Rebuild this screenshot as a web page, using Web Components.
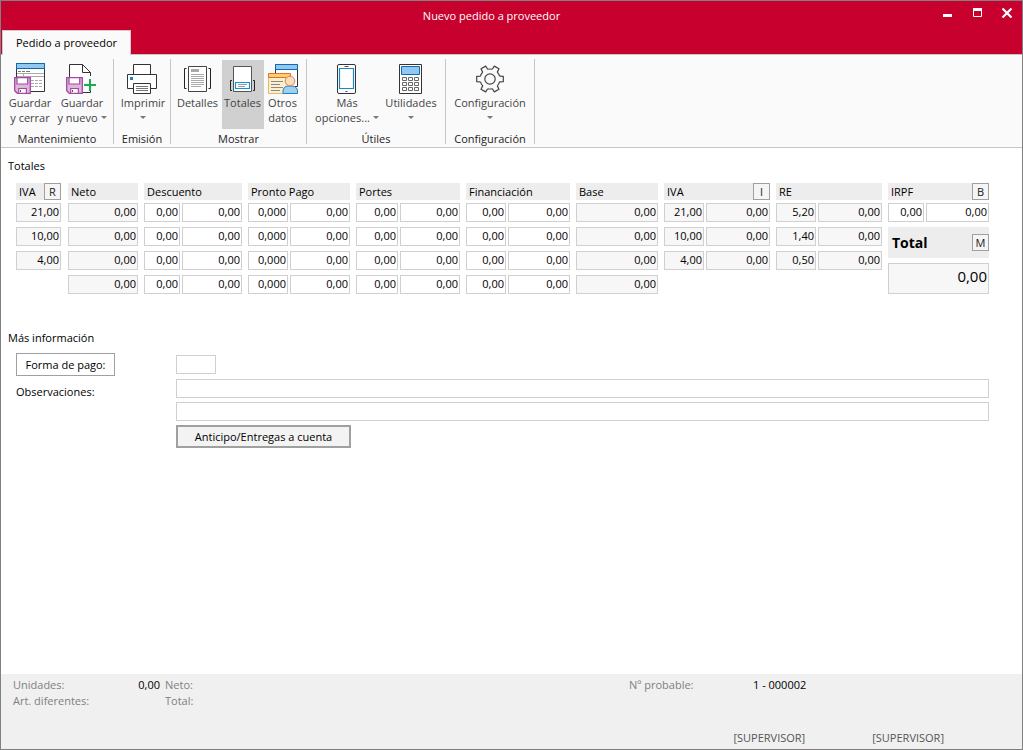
<!DOCTYPE html>
<html lang="es">
<head>
<meta charset="utf-8">
<meta name="viewport" content="width=device-width, initial-scale=1">
<title>Nuevo pedido a proveedor</title>
<style>
  :root {
    --red: #c8002d;
    --line: #d0d0d0;
    --edge: #a0a0a0;
    --head: #ededed;
    --locked: #f7f7f7;
  }
  body { margin: 0; font: 11px/15px "Open Sans", "Noto Sans", sans-serif; color: #000; background: #fff; }
</style>
</head>
<body>
<order-window></order-window>

<template id="order-window">
  <style>
    :host { display: flex; flex-direction: column; min-height: 100vh; box-sizing: border-box; border: 1px solid #808080; }
    main { flex: 1; padding: 10px 33px 16px 7px; }
    h2 { margin: 0; font: inherit; }
    totals-grid { margin: 10px 0 36px 8px; }
    extra-form { margin: 8px 0 0 8px; }
  </style>
  <title-bar>Nuevo pedido a proveedor</title-bar>
  <ribbon-bar></ribbon-bar>
  <main>
    <h2>Totales</h2>
    <totals-grid></totals-grid>
    <h2>Más información</h2>
    <extra-form></extra-form>
  </main>
  <status-bar></status-bar>
</template>

<template id="title-bar">
  <style>
    :host { display: block; background: var(--red); color: #fff; }
    .top { display: flex; height: 29px; }
    h1 { flex: 1; margin: 0; padding: 7px 0 0 50px; font: inherit; text-align: center; }
    .controls { display: flex; width: 90px; }
    .controls button { flex: 1; height: 22px; padding: 0; border: 0; background: none; color: inherit; }
    svg { display: block; margin: 0 auto; }
    nav { display: flex; padding-left: 1px; border-bottom: 1px solid #c6c6c6; height: 24px; }
    a { box-sizing: border-box; height: 25px; padding: 4px 13px 0; background: #fafafa; color: #000; text-decoration: none; border: 1px solid #d8c8cc; border-bottom: 0; }
  </style>
  <div class="top">
    <h1><slot></slot></h1>
    <div class="controls">
      <button aria-label="Minimizar"><svg width="12" height="12"><path d="M2 9.500h9" stroke="#fff" stroke-width="3"/></svg></button>
      <button aria-label="Maximizar"><svg width="12" height="12"><path d="M2.500 2.500h8v8h-8z" fill="none" stroke="#fff"/><path d="M2 3.500h9" stroke="#fff" stroke-width="3"/></svg></button>
      <button aria-label="Cerrar"><svg width="12" height="12"><path d="M1.500 2.500l9 9M10.500 2.500l-9 9" stroke="#fff" stroke-width="2.200"/></svg></button>
    </div>
  </div>
  <nav><a href="#pedido">Pedido a proveedor</a></nav>
</template>

<template id="ribbon-bar">
  <style>
    :host { display: flex; padding: 4px 0 3px; background: #fafafa; border-bottom: 1px solid #c6c6c6; }
    .w38 { width: 38px; } .w42 { width: 42px; } .w48 { width: 48px; } .w52 { width: 52px; } .w64 { width: 64px; } .w84 { width: 84px; }
    .left { --right: 2px; }
    .right { --left: 2px; }
    .far { --left: 6px; }
  </style>
  <ribbon-group class="left" label="Mantenimiento" style="width:112px">
    <ribbon-button class="w52" icon="saveclose" label="Guardar" second="y cerrar"></ribbon-button>
    <ribbon-button class="w52" icon="savenew" label="Guardar" second="y nuevo" menu></ribbon-button>
  </ribbon-group>
  <ribbon-group class="right" label="Emisión" style="width:56px">
    <ribbon-button class="w48" icon="print" label="Imprimir" menu></ribbon-button>
  </ribbon-group>
  <ribbon-group class="left" label="Mostrar" style="width:135px">
    <ribbon-button class="w48" icon="details" label="Detalles"></ribbon-button>
    <ribbon-button class="w42" icon="totals" label="Totales" pressed></ribbon-button>
    <ribbon-button class="w38" icon="other" label="Otros" second="datos"></ribbon-button>
  </ribbon-group>
  <ribbon-group class="far" label="Útiles" style="width:138px">
    <ribbon-button class="w64" icon="phone" label="Más" second="opciones..." menu></ribbon-button>
    <ribbon-button class="w64" icon="calc" label="Utilidades" menu></ribbon-button>
  </ribbon-group>
  <ribbon-group label="Configuración" style="width:88px">
    <ribbon-button class="w84" icon="gear" label="Configuración" menu></ribbon-button>
  </ribbon-group>
</template>

<template id="ribbon-group">
  <style>
    :host { display: flex; flex-direction: column; border-right: 1px solid #c6c6c6; height: 85px; }
    .row { display: flex; justify-content: center; height: 71px; padding: 1px var(--right, 0) 0 var(--left, 0); box-sizing: border-box; }
    .label { text-align: center; color: #222; padding-top: 2px; }
  </style>
  <div class="row"><slot></slot></div>
  <div class="label"></div>
</template>

<template id="ribbon-button">
  <style>
    :host { display: block; }
    button { display: flex; flex-direction: column; align-items: center; width: 100%; height: 69px; padding: 3px 0 0; border: 0; background: none; font: inherit; color: #444; white-space: nowrap; }
    button[aria-pressed="true"] { background: #d0d0d0; }
    svg { display: block; flex: none; }
    .second { display: flex; align-items: center; gap: 3px; height: 15px; }
    .arrow { border: 3px solid transparent; border-top-color: #777; border-bottom: 0; }
  </style>
  <button><svg width="32" height="32" viewBox="0 0 32 32" fill="none" overflow="visible" aria-hidden="true"></svg><span class="first"></span><span class="second"></span></button>
</template>

<template id="totals-grid">
  <style>
    :host { display: grid; gap: 6px; grid-template-columns: minmax(0,46fr) minmax(0,70fr) minmax(0,98fr) minmax(0,102fr) minmax(0,104fr) minmax(0,104fr) minmax(0,82fr) minmax(0,106fr) minmax(0,106fr) minmax(0,101fr); }
    .grand { display: flex; align-items: center; justify-content: space-between; height: 31px; margin: 5px 0; padding-left: 4px; background: var(--head); font-size: 14px; font-weight: 700; }
    .last { min-width: 0; }
    .last > value-field { --size: 15px; --height: 31px; --bottom: 5px; }
    .rates { margin-right: 1px; }
  </style>
  <amount-column class="rates" label="IVA" key="R" values="21,00;10,00;4,00" locked></amount-column>
  <amount-column label="Neto" values="0,00;0,00;0,00;0,00" locked></amount-column>
  <amount-column label="Descuento" first="36" values="0,00|0,00;0,00|0,00;0,00|0,00;0,00|0,00"></amount-column>
  <amount-column label="Pronto Pago" first="40" values="0,000|0,00;0,000|0,00;0,000|0,00;0,000|0,00"></amount-column>
  <amount-column label="Portes" first="42" values="0,00|0,00;0,00|0,00;0,00|0,00;0,00|0,00"></amount-column>
  <amount-column label="Financiación" first="40" values="0,00|0,00;0,00|0,00;0,00|0,00;0,00|0,00"></amount-column>
  <amount-column label="Base" values="0,00;0,00;0,00;0,00" locked></amount-column>
  <amount-column label="IVA" key="I" first="40" values="21,00|0,00;10,00|0,00;4,00|0,00" locked></amount-column>
  <amount-column label="RE" first="40" values="5,20|0,00;1,40|0,00;0,50|0,00" locked></amount-column>
  <div class="last">
    <amount-column label="IRPF" key="B" first="36" values="0,00|0,00"></amount-column>
    <div class="grand">Total<key-button>M</key-button></div>
    <value-field label="Total" value="0,00" locked></value-field>
  </div>
</template>

<template id="amount-column">
  <style>
    :host { display: block; min-width: 0; }
    .head { display: flex; justify-content: space-between; height: 17px; margin-bottom: 3px; padding-left: 3px; background: var(--head); line-height: 17px; }
    .rows { display: grid; gap: 5px 2px; }
  </style>
  <div class="head"><span></span></div>
  <div class="rows"></div>
</template>

<template id="key-button">
  <style>
    :host { display: block; }
    button { display: block; width: 17px; height: 17px; padding: 0; border: 1px solid var(--edge); background: #f5f5f5; font: 11px/14px "Open Sans", "Noto Sans", sans-serif; color: #222; }
  </style>
  <button><slot></slot></button>
</template>

<template id="value-field">
  <style>
    :host { display: block; min-width: 0; }
    input { display: block; box-sizing: border-box; width: 100%; height: var(--height, 19px); margin: 0; padding: 0 1px var(--bottom, 2px) 0; border: 1px solid var(--line); border-radius: 0; background: #fff; font: inherit; font-size: var(--size, 11px); color: #000; text-align: right; }
    input[readonly] { background: var(--locked); }
  </style>
  <input>
</template>

<template id="extra-form">
  <style>
    :host { display: grid; grid-template-columns: 160px minmax(0, 1fr); grid-template-rows: 23px 20px 20px 23px; row-gap: 3px; align-items: start; }
    button { font: inherit; color: #000; padding: 0; height: 23px; justify-self: start; }
    .pay { width: 99px; border: 1px solid var(--edge); background: #fff; }
    .advance { grid-column: 2; width: 175px; border: 2px solid var(--edge); background: #f3f3f3; }
    input { box-sizing: border-box; width: 100%; height: 19px; margin: 0; padding: 0 2px; border: 1px solid var(--line); font: inherit; }
    label { align-self: end; }
    #pay { width: 40px; align-self: center; }
    #obs2 { grid-column: 2; }
  </style>
  <button class="pay">Forma de pago:</button><input id="pay" aria-label="Forma de pago">
  <label for="obs1">Observaciones:</label><input id="obs1">
  <input id="obs2" aria-label="Observaciones, segunda línea">
  <button class="advance">Anticipo/Entregas a cuenta</button>
</template>

<template id="status-bar">
  <style>
    :host { display: block; box-sizing: border-box; padding: 3px 12px 4px; background: #f0f0f0; color: #808080; }
    .facts { display: grid; grid-template-columns: 96px 51px minmax(0, 1fr) 124px 257px; row-gap: 1px; height: 53px; align-content: start; }
    .num { text-align: right; }
    .facts > :nth-child(3), .facts > :nth-child(8) { padding-left: 5px; }
    b { font-weight: 400; color: #000; }
    .users { display: flex; justify-content: flex-end; gap: 67px; padding-right: 66px; color: #555; }
  </style>
  <div class="facts">
    <span>Unidades:</span><b class="num">0,00</b><span>Neto:</span><span>Nº probable:</span><b>1 - 000002</b>
    <span>Art. diferentes:</span><b></b><span>Total:</span>
  </div>
  <div class="users"><span>[SUPERVISOR]</span><span>[SUPERVISOR]</span></div>
</template>

<script>
const floppy = `<path d="M.7 14.700h15.600v15.600h-13l-2.600-2.600z" fill="#dfb6dc" stroke="#a349a4" stroke-width="1.300"/>
  <path d="M3 14.700h10.700v6.300H3z" fill="#fff" stroke="#a349a4" stroke-width="1.200"/>
  <path d="M4.700 25.500h7.600v4.800H4.700z" fill="#fff" stroke="#a349a4" stroke-width="1.200"/><path d="M6.500 27v2" stroke="#555"/>`;
const tooth = 'M9.600-2.900L13.300-2.700V2.700L9.600 2.900Q8.800 5.200 7.300 6.800';
const icons = {
  saveclose: `<path d="M2.500.5h28v28h-28z" fill="#fff" stroke="#333"/><path d="M2.500.5h28v5h-28z" fill="#91c8f0" stroke="#0f6ab4"/>
    <path d="M4 8.500h3m1 0h3m1 0h4" stroke="#777"/><path d="M3 10.500h27M3 13.500h27M9.500 10.500v3" stroke="#aaa"/>
    <path d="M17 17.500h3m1 0h3m1 0h3M17 20.500h3m1 0h3m1 0h3M17 23.500h3m1 0h3m1 0h3" stroke="#aaa"/>${floppy}`,
  savenew: `<path d="M3.500 1.500h13l8 8v20h-21z" fill="#fff"/><path d="M3.500 14V1.500h13l8 8V13M17 29.500h7.500V28" stroke="#333"/><path d="M16.500 1.500v8h8" stroke="#333"/>${floppy}
    <path d="M18 22h12M24 16v12" stroke="#fafafa" stroke-width="4"/><path d="M18 22h12M24 16v12" stroke="#1cab53" stroke-width="2"/>`,
  print: `<path d="M6.500 1.500h17v10h-17z" fill="#fff" stroke="#333"/><path d="M.5 11.500h29v14H.5z" fill="#fff" stroke="#333"/>
    <path d="M3 14h3v3H3z" fill="#1c80cc"/><path d="M6.500 20.500h17v10h-17z" fill="#fff" stroke="#333"/><path d="M9 23.500h12M9 25.500h12M9 27.500h12" stroke="#777"/>`,
  details: `<path d="M6.500 3.500h18v25h-18z" fill="#fff" stroke="#444"/><path d="M4.500 5.500h-2v20h2M26.500 5.500h2v20h-2" stroke="#222"/>
    <path d="M9 6h8v3H9z" fill="#aaa"/><path d="M9 11.500h13M9 13.500h13M9 15.500h13M9 17.500h13M9 19.500h13M9 21.500h13M9 23.500h10" stroke="#aaa"/>`,
  totals: `<path d="M6.500 3.500h18v25h-18z" fill="#fff" stroke="#555"/><path d="M5 17.500H3.500v10H5M26 17.500h1.500v10H26" stroke="#222"/>
    <path d="M8.500 19.500h14v6h-14z" fill="#fff" stroke="#0f94d6" stroke-width="1.200"/><path d="M11 21.500h9M11 23.500h7" stroke="#999"/>`,
  other: `<path d="M8.500 1.500h22v22h-22z" fill="#fff" stroke="#333"/><path d="M8.500 1.500h22v5h-22z" fill="#91c8f0" stroke="#0f6ab4"/>
    <path d="M1.500 11.500h22v19h-22z" fill="#fcefce" stroke="#dfb86c"/><path d="M1.500 10.500h22v4h-22z" fill="#ffce70" stroke="#e07030"/>
    <path d="M4 18.500h12M4 21.500h9M4 24.500h12M4 27.500h9" stroke="#888"/>
    <path d="M16 30.500v-2.500c0-3 2.500-5 5-5h4c3 0 5.500 2 5.500 5v2.500z" fill="#a1d0ee" stroke="#2580c0"/><circle cx="23" cy="18" r="4.800" fill="#ffdcb8" stroke="#cc8a5c"/>`,
  phone: `<rect x="6.500" y="1.500" width="18" height="29" rx="1.500" fill="#fff" stroke="#333"/><path d="M8.500 5.500h14v20h-14z" stroke="#1c86c8" stroke-width="1.200"/><path d="M13.500 3.500h4M14.500 28.500h2" stroke="#555"/>`,
  calc: `<path d="M4.500 1.500h22v29h-22z" fill="#fff" stroke="#333"/><path d="M6.500 3.500h18v8h-18z" fill="#91c8f0" stroke="#0f6ab4"/>
    <path d="M7.500 14.500h4v3h-4zM13.500 14.500h4v3h-4zM19.500 14.500h4v3h-4zM7.500 19.500h4v3h-4zM13.500 19.500h4v3h-4zM19.500 19.500h4v3h-4zM7.500 24.500h4v3h-4zM13.500 24.500h4v3h-4zM19.500 24.500h4v3h-4z" stroke="#666"/>`,
  gear: `<g transform="translate(16 16)" stroke="#444" stroke-width="1.200" stroke-linejoin="round">${[0, 60, 120, 180, 240, 300].map(a => `<path d="${tooth}" transform="rotate(${a})"/>`).join('')}<circle r="5.200"/></g>`
};

class Part extends HTMLElement {
  constructor() {
    super();
    this.attachShadow({ mode: 'open' }).append(document.getElementById(this.localName).content.cloneNode(true));
  }
  $(selector) { return this.shadowRoot.querySelector(selector); }
}

class RibbonGroup extends Part {
  connectedCallback() { this.$('.label').textContent = this.getAttribute('label'); }
}

class RibbonButton extends Part {
  connectedCallback() {
    this.$('svg').innerHTML = icons[this.getAttribute('icon')];
    this.$('.first').textContent = this.getAttribute('label');
    const second = this.$('.second');
    second.textContent = this.getAttribute('second') || '';
    if (this.hasAttribute('menu')) {
      const arrow = document.createElement('i');
      arrow.className = 'arrow';
      second.append(arrow);
      this.$('button').setAttribute('aria-haspopup', 'menu');
    }
    if (this.hasAttribute('pressed')) this.$('button').setAttribute('aria-pressed', 'true');
  }
}

class ValueField extends Part {
  connectedCallback() {
    const input = this.$('input');
    input.value = this.getAttribute('value');
    input.readOnly = this.hasAttribute('locked');
    input.setAttribute('aria-label', this.getAttribute('label'));
  }
}

class AmountColumn extends Part {
  connectedCallback() {
    const label = this.getAttribute('label');
    this.$('.head span').textContent = label;
    if (this.hasAttribute('key')) {
      const key = document.createElement('key-button');
      key.textContent = this.getAttribute('key');
      this.$('.head').append(key);
    }
    const rows = this.$('.rows');
    const first = this.getAttribute('first');
    rows.style.gridTemplateColumns = first ? `${first}px minmax(0, 1fr)` : 'minmax(0, 1fr)';
    this.getAttribute('values').split(/[;|]/).forEach((value, i) => {
      const field = document.createElement('value-field');
      field.setAttribute('value', value);
      field.setAttribute('label', `${label} ${i + 1}`);
      field.toggleAttribute('locked', this.hasAttribute('locked'));
      rows.append(field);
    });
  }
}

customElements.define('value-field', ValueField);
customElements.define('key-button', class extends Part {});
customElements.define('amount-column', AmountColumn);
customElements.define('totals-grid', class extends Part {});
customElements.define('extra-form', class extends Part {});
customElements.define('ribbon-button', RibbonButton);
customElements.define('ribbon-group', RibbonGroup);
customElements.define('ribbon-bar', class extends Part {});
customElements.define('title-bar', class extends Part {});
customElements.define('status-bar', class extends Part {});
customElements.define('order-window', class extends Part {});
</script>
</body>
</html>
